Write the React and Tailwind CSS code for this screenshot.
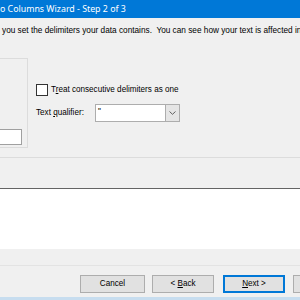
import React from "react";

export default function App() {
  return (
    <div
      className="w-[300px] h-[300px] overflow-hidden bg-[#f0f0f0] flex flex-col text-black text-[8.15px]"
      style={{ fontFamily: '"Liberation Sans", Arial, sans-serif' }}
    >
      {/* title bar */}
      <div
        className="h-[18px] shrink-0 bg-[#0078d7] text-white text-[8.8px] leading-[19px] whitespace-nowrap"
        style={{ fontFamily: '"Noto Sans", "Open Sans", sans-serif' }}
      >
        o Columns Wizard - Step 2 of 3
      </div>

      {/* description */}
      <div className="mt-[8px] h-[10px] leading-[10px] pl-[2px] text-[8.25px] whitespace-nowrap">
        you set the delimiters your data contains.&nbsp; You can see how your text is affected in
      </div>

      {/* delimiters + options */}
      <div className="mt-[22px] h-[90px] shrink-0 flex">
        <div className="w-[28px] h-full border-t border-b border-r border-[#dcdcdc] flex flex-col justify-end pb-[2px]">
          <div className="w-[22px] h-[16px] bg-white border border-l-0 border-[#a0a0a0]" />
        </div>

        <div className="ml-[8px] pt-[26px] flex flex-col">
          <div className="flex items-center h-[12px]">
            <div className="w-[12px] h-[12px] bg-white border border-[#333]" />
            <span className="ml-[3px] whitespace-nowrap leading-[12px]">
              T<span className="underline">r</span>eat consecutive delimiters as one
            </span>
          </div>

          <div className="mt-[8px] flex items-center h-[18px]">
            <span className="w-[59px] whitespace-nowrap">
              Text <span className="underline">q</span>ualifier:
            </span>
            <div className="w-[85px] h-[18px] bg-white border border-[#adadad] flex">
              <div className="flex-1 pl-[2px] leading-[14px]">"</div>
              <div className="w-[14px] h-full bg-[#e5e5e5] border-l border-[#adadad] flex items-center justify-center">
                <svg width="7" height="4" viewBox="0 0 7 4">
                  <path d="M0.5 0.5 L3.5 3.3 L6.5 0.5" fill="none" stroke="#606060" strokeWidth="1" />
                </svg>
              </div>
            </div>
          </div>
        </div>
      </div>

      {/* data preview group */}
      <div className="mt-[9px] border-t border-[#dcdcdc]" />
      <div className="mt-[30px] h-[61px] shrink-0 bg-white border-t border-[#646464]" />
      <div className="mt-[16px] border-t border-[#e3e3e3]" />

      {/* buttons */}
      <div className="mt-[9px] h-[18px] shrink-0 flex">
        <button className="ml-[80px] w-[65px] shrink-0 h-full bg-[#e1e1e1] border border-[#adadad] leading-none">
          Cancel
        </button>
        <button className="ml-[7px] w-[62px] shrink-0 h-full bg-[#e1e1e1] border border-[#adadad] leading-none">
          &lt; <span className="underline">B</span>ack
        </button>
        <button className="ml-[9px] w-[62px] shrink-0 h-full bg-[#e1e1e1] border-2 border-[#0078d7] leading-none">
          <span className="underline">N</span>ext &gt;
        </button>
        <div className="ml-[8px] w-[62px] shrink-0 h-full bg-[#e1e1e1] border border-[#adadad]" />
      </div>

      <div className="mt-[4px] flex-1 bg-[#c7ddef]" />
    </div>
  );
}
